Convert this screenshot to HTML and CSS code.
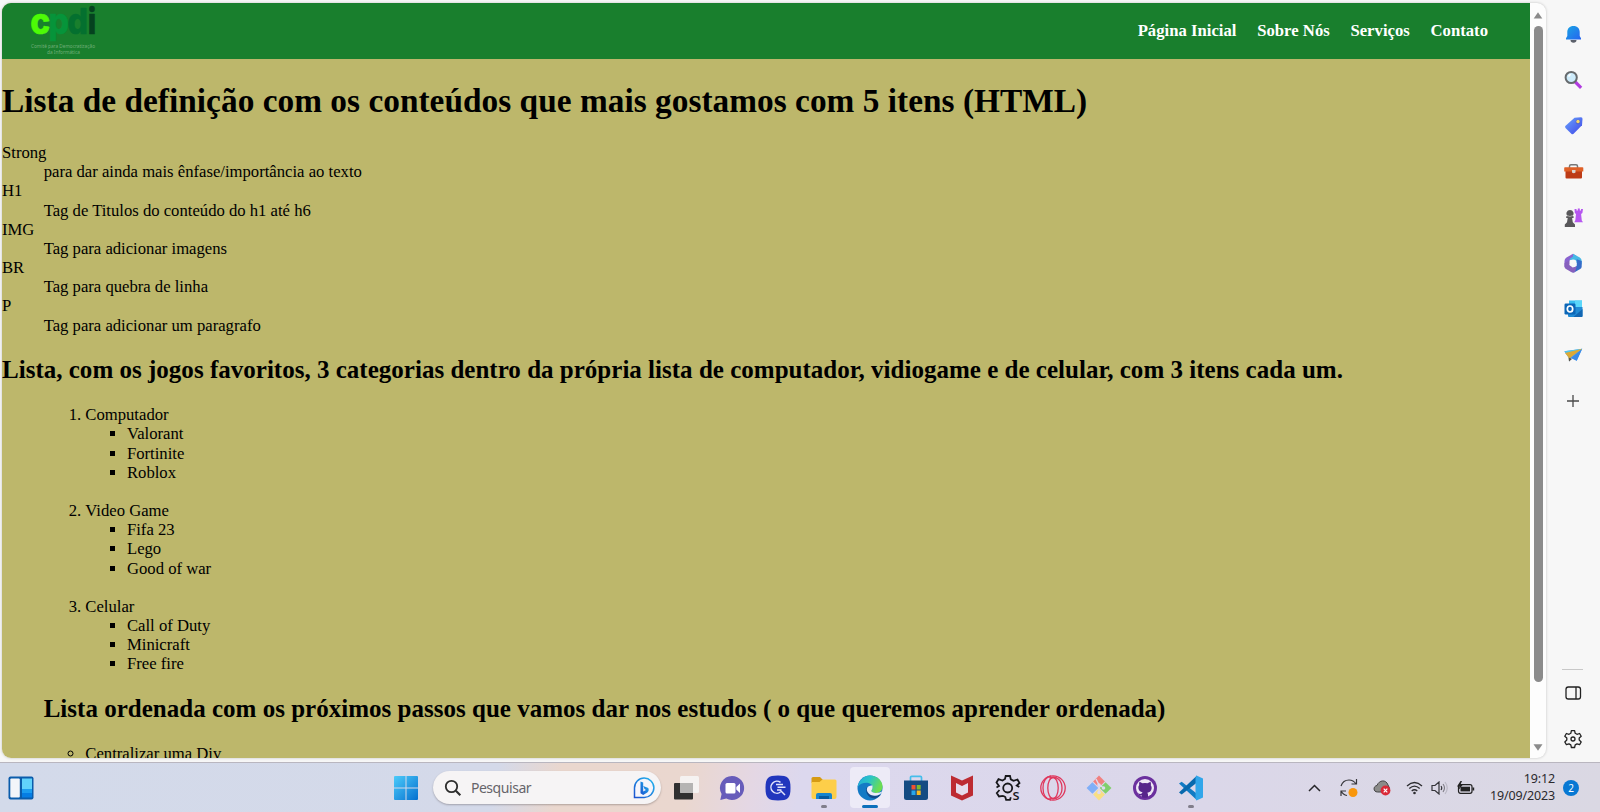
FILE: index.html
```html
<!DOCTYPE html>
<html lang="pt-BR">
<head>
<meta charset="utf-8">
<title>CPDI</title>
<link rel="stylesheet" href="styles.css">
</head>
<body>
<div class="browser">
  <div class="viewport">
    <div class="page">
      <header class="header">
        <svg class="logo" width="70" height="56" viewBox="28 3 70 56">
          <g class="logo-word">
            <text x="30.2" y="34" fill="#4dfb06" stroke="#4dfb06" textLength="20" lengthAdjust="spacingAndGlyphs">c</text>
            <text x="48.6" y="34" fill="#06943a" stroke="#06943a" textLength="20.500" lengthAdjust="spacingAndGlyphs">p</text>
            <text x="67.600" y="34" fill="#04702f" stroke="#04702f" textLength="20.500" lengthAdjust="spacingAndGlyphs">d</text>
            <text x="87.800" y="34" fill="#05421f" stroke="#05421f" textLength="8.500" lengthAdjust="spacingAndGlyphs">i</text>
          </g>
          <g class="logo-caption">
            <text x="31" y="48" textLength="64" lengthAdjust="spacingAndGlyphs">Comitê para Democratização</text>
            <text x="47" y="53.5" textLength="33" lengthAdjust="spacingAndGlyphs">da Informática</text>
          </g>
        </svg>
        <nav class="nav"><a>Página Inicial</a><a>Sobre Nós</a><a>Serviços</a><a>Contato</a></nav>
      </header>
      <main>
        <h1>Lista de definição com os conteúdos que mais gostamos com 5 itens (HTML)</h1>
        <dl>
          <dt>Strong</dt><dd>para dar ainda mais ênfase/importância ao texto</dd>
          <dt>H1</dt><dd>Tag de Titulos do conteúdo do h1 até h6</dd>
          <dt>IMG</dt><dd>Tag para adicionar imagens</dd>
          <dt>BR</dt><dd>Tag para quebra de linha</dd>
          <dt>P</dt><dd>Tag para adicionar um paragrafo</dd>
        </dl>
        <h2>Lista, com os jogos favoritos, 3 categorias dentro da própria lista de computador, vidiogame e de celular, com 3 itens cada um.</h2>
        <div class="nested">
          <ol class="categories">
            <li>Computador<ul class="games"><li>Valorant</li><li>Fortinite</li><li>Roblox</li></ul></li>
            <li>Video Game<ul class="games"><li>Fifa 23</li><li>Lego</li><li>Good of war</li></ul></li>
            <li>Celular<ul class="games"><li>Call of Duty</li><li>Minicraft</li><li>Free fire</li></ul></li>
          </ol>
          <h2>Lista ordenada com os próximos passos que vamos dar nos estudos ( o que queremos aprender ordenada)</h2>
          <ul class="steps"><li>Centralizar uma Div</li></ul>
        </div>
      </main>
    </div>
    <div class="scrollbar">
      <svg width="10" height="7" viewBox="0 0 10 7"><path d="M5 0.3 9.3 6.5H.7Z" fill="#8b8b8b"/></svg>
      <div class="thumb"></div>
      <svg width="10" height="7" viewBox="0 0 10 7"><path d="M.5.3H9.5L5 6.8Z" fill="#8b8b8b"/></svg>
    </div>
  </div>
  <aside class="sidebar">
    <div class="tools">
      <span><svg viewBox="0 0 24 24"><defs><linearGradient id="bell" x1="0" y1="0" x2="1" y2="1"><stop offset="0" stop-color="#1aa5e4"/><stop offset="1" stop-color="#2563f0"/></linearGradient></defs><path d="M9.5 18h6c0 1.7-1.2 2.8-3 2.8s-3-1.100-3-2.800z" fill="#5b606b"/><path d="M12.500 4C8.600 4 6.300 6.600 6.300 10v4L5 16.200V17.500H20V16.200L18.700 14V10C18.700 6.600 16.400 4 12.500 4Z" fill="url(#bell)"/></svg></span>
      <span><svg viewBox="0 0 24 24"><path d="m15 14.700 4 4" stroke="#b13be0" stroke-width="3.200" stroke-linecap="square"/><circle cx="10.200" cy="9.500" r="5.600" fill="#cdebfa" stroke="#666a6d" stroke-width="2"/><path d="m7.500 8.500 2-2.200" stroke="#fff" stroke-width="1.500"/></svg></span>
      <span><svg viewBox="0 0 24 24"><defs><linearGradient id="tag" x1="0" y1="0" x2="1" y2="1"><stop offset="0" stop-color="#69a4fb"/><stop offset="1" stop-color="#3f45e8"/></linearGradient></defs><path d="M13.500 3.700 20 3.200Q21.600 3.300 21.500 5L21 11.300 12.600 19.800Q11.500 20.800 10.300 19.700L4.500 14Q3.500 12.800 4.600 11.700Z" fill="url(#tag)"/><circle cx="17" cy="8" r="2.400" fill="#5465c9"/><circle cx="17" cy="7.500" r="1.700" fill="#f4d66a"/></svg></span>
      <span><svg viewBox="0 0 24 24"><path d="M8.500 8V6.200Q8.500 4.700 10 4.700h5Q16.500 4.700 16.500 6.200V8" fill="none" stroke="#777" stroke-width="1.500"/><rect x="4.500" y="9" width="16.500" height="9.500" rx="1" fill="#bd3b16"/><path d="M4 7.300h17.500q.8 0 .8.800v3.400H3.200V8.100q0-.8.800-.8z" fill="#df6027"/><path d="M11 10h3.500v2.500q-1.700 1.600-3.500 0z" fill="#d9d5d1"/></svg></span>
      <span><svg viewBox="0 0 24 24"><g transform="translate(0 -1)"><path d="M13.500 4h2v1.500h1.300V3.500h2v2H20V4h2l-.6 4-1.300 1 .7 6.500 1.200 1.800h-8.700l1-2 .7-6.300-1.200-1z" fill="#b657f0"/><path d="M9 5a3.700 3.700 0 0 1 2.600 6.300h1v1.800h-1.500l.7 4.200 2.200 2.200v2.400H3.800v-2.400L6 17.300l.7-4.200H5.200v-1.800h1.200A3.700 3.700 0 0 1 9 5Z" fill="#59585b"/><path d="M6 10.500q3 2 5.800 0" stroke="#aaa" fill="none"/></g></svg></span>
      <span><svg viewBox="0 0 24 24"><path d="M12 2.800 5.500 6.500Q3.500 7.700 3.500 10v6l4.800-2.700V9.800L15.500 5Z" fill="#8a63cf"/><path d="M12 2.800 18.800 6.600Q20.700 7.800 20.700 10v3.500L15.500 12 8.300 8.200 12 5.500Z" fill="#45b8e6"/><path d="M20.700 10v5.500q0 1.700-1.500 2.600L14 21.100q-1.500.9-3.200 0L8.500 19.600 15.700 15V8.300Z" fill="#366bc8"/><path d="M3.500 12v3.500q0 1.700 1.500 2.600l5.200 3q1.800 1 3.800 0l1.700-5.700-4 1L8.300 14V9.500Z" fill="#8760bd"/><circle cx="12.200" cy="11.900" r="3.300" fill="#f7f7f7"/></svg></span>
      <span><svg viewBox="0 0 24 24"><rect x="8" y="3.500" width="13" height="8" fill="#39bdf0"/><path d="M14 3.500h7v7h-7z" fill="#5ad7fa"/><path d="M7 10h14.500v9q0 1-1 1H8q-1 0-1-1z" fill="#218bd5"/><path d="m21.500 12-9 8h8q1 0 1-1z" fill="#1266b2"/><rect x="3.500" y="6.500" width="11" height="11" rx="1.200" fill="#0b66b7"/><ellipse cx="9" cy="12" rx="2.700" ry="3" fill="none" stroke="#fff" stroke-width="1.700"/></svg></span>
      <span><svg viewBox="0 0 24 24"><path d="m3.300 8.200 17.900-2.500-5.500 12-5.200-2.500L8 18.500l-.7-4.200Z" fill="#4ca0ed"/><path d="m21.200 5.700-11 9.300 5.500 2.700Z" fill="#388ae9"/><path d="M3.300 8.200 21.200 5.700 9.500 12.800Z" fill="#50c6ed"/><path d="M4 10 21.200 5.700 9.300 14.700 8 18.300l-.7-4.300Z" fill="#dba936"/><path d="M8 14.700 8 18.500l3-2.500z" fill="#59534f"/></svg></span>
      <span><svg viewBox="0 0 24 24"><path d="M12 6v12M6 12h12" stroke="#4a4a4a" stroke-width="1.300"/></svg></span>
    </div>
    <div class="tools tools-bottom">
      <span><svg viewBox="0 0 24 24"><rect x="5" y="6" width="14.500" height="12" rx="2.300" fill="none" stroke="#222" stroke-width="1.300"/><path d="M15 6v12" stroke="#222" stroke-width="1.300"/></svg></span>
      <span><svg viewBox="0 0 24 24" fill="none" stroke="#222" stroke-width="1.300" stroke-linejoin="round"><path d="M10.400 3.700h3.200l.6 2.600 1.800 1 2.600-.8 1.600 2.800-2 1.800v2l2 1.800-1.600 2.800-2.600-.8-1.800 1-.6 2.600h-3.200L9.800 17.900l-1.800-1-2.600.8-1.600-2.800 2-1.800v-2l-2-1.800 1.600-2.800 2.600.8 1.800-1Z"/><circle cx="12" cy="12" r="2"/></svg></span>
    </div>
  </aside>
</div>
<footer class="taskbar">
  <div class="widgets"><svg width="26" height="24" viewBox="0 0 26 24"><rect x=".5" y=".5" width="25" height="23" rx="2" fill="#0b5cab"/><rect x="2.300" y="2.500" width="9.500" height="19" rx="1" fill="#f3f5f9"/><path d="M14 2.500h10v10.500H14z" fill="#61d2fb"/><path d="M14 13h10v4H14z" fill="#1a9cf0"/><path d="M14 17h10v4.500H14z" fill="#057de4"/></svg></div>
  <div class="apps">
    <span class="app"><svg viewBox="0 0 28 28"><defs><linearGradient id="win" gradientUnits="userSpaceOnUse" x1="2" y1="2" x2="26" y2="26"><stop offset="0" stop-color="#4ccbfa"/><stop offset="1" stop-color="#0570cf"/></linearGradient></defs><path d="M3 2h10.500v11.500H2V3q0-1 1-1zM14.500 2H25q1 0 1 1v10.500H14.500zM2 14.500h11.500V26H3q-1 0-1-1zM14.500 14.500H26V25q0 1-1 1H14.500z" fill="url(#win)"/></svg></span>
    <div class="search">
      <svg width="18" height="18" viewBox="0 0 18 18"><circle cx="7.500" cy="7.500" r="5.700" fill="none" stroke="#2d2d2d" stroke-width="1.800"/><path d="m11.800 11.800 4.500 4.500" stroke="#2d2d2d" stroke-width="2.100"/></svg>
      <span class="search-text">Pesquisar</span>
      <svg width="22" height="22" viewBox="0 0 22 22"><defs><linearGradient id="bing" x1="1" y1="0" x2="0" y2="1"><stop offset="0" stop-color="#24b8ef"/><stop offset="1" stop-color="#1a51cf"/></linearGradient></defs><path d="M1.500 20.500V11A9.700 9.700 0 1 1 11 20.500Z" fill="#f6f5fb" stroke="url(#bing)" stroke-width="1.500"/><path d="m7.500 4.500 2.700 1v9l2.800-1.600-1.500-.8-1.200-3 5 2q1.200 3-1 4.400L10.200 18l-2.700-1.700z" fill="url(#bing)"/></svg>
    </div>
    <span class="app"><svg viewBox="0 0 28 28"><rect x="2" y="9" width="19" height="16.500" rx="1" fill="#303030"/><rect x="8" y="2" width="19" height="17" rx="1.500" fill="#f5f4f3" fill-opacity=".93"/><path d="M8 9h13v10H9.500Q8 19 8 17.500Z" fill="#b5b4b3"/></svg></span>
    <span class="app"><svg viewBox="0 0 28 28"><path d="M14 2A12 12 0 1 1 8.300 24.500L2.300 26 3.600 20A12 12 0 0 1 14 2Z" fill="#675cba"/><rect x="7.500" y="9" width="10" height="10.500" rx="1.500" fill="#fff"/><path d="m18.300 13 3.700-3.500v9.500l-3.700-3.500z" fill="#fff"/></svg></span>
    <span class="app"><svg viewBox="0 0 28 28"><path d="M14 1.500c10 0 12.500 2.500 12.500 12.500S24 26.500 14 26.500 1.500 24 1.500 14 4 1.500 14 1.500Z" fill="#2136bd"/><path d="M16.500 8.300A6 6 0 1 0 16.500 18M16.500 16.500l4.500 4.500M12 10.500h7M13.500 13.300h8M13 16h4.500" fill="none" stroke="#e3e5fb" stroke-width="1.500"/></svg></span>
    <span class="app"><svg viewBox="0 0 28 28"><path d="M1.500 4.500Q1.500 3 3 3h7l3 3-3 3H1.500z" fill="#d69b13"/><path d="M1.500 8h8l3-2.500H25q1.500 0 1.500 1.500v16q0 2-2 2h-21q-2 0-2-2z" fill="#fdce49"/><path d="M6 25v-4q0-2 2-2h12q2 0 2 2v4z" fill="#1684ce"/><path d="M9 22h10v3H9z" fill="#075a9e"/></svg><i class="dot"></i></span>
    <span class="app active"><svg viewBox="0 0 28 28"><defs><linearGradient id="eg" x1="0" y1="0" x2="1" y2=".4"><stop offset="0" stop-color="#20a7dd"/><stop offset=".5" stop-color="#2bc5c5"/><stop offset="1" stop-color="#6cdd50"/></linearGradient></defs><circle cx="14" cy="14" r="12.500" fill="#137ac5"/><path d="M1.600 13C3 6 8 1.500 14 1.500c7.300 0 12.500 5.200 12.500 11 0 4.200-3 6.500-6.600 6.500-2.500 0-4.500-.9-4.500-2.200 0-1 1.200-1.300 1.200-3.800C16.600 8 6 6.500 1.600 13Z" fill="url(#eg)"/><path d="M11.300 12.600C8 17 12 25 19 24.500q3-.5 5.300-3.300c.5-.6 0-1-.7-.7C17 23.500 11 19.500 11.300 12.600Z" fill="#114a8b"/><path d="M16.500 11.500c-5-.6-7 3.500-4.600 7 2.300 3.300 7.800 4.200 11.600 2l1.600-1.200 1.900-2.300C25 18 22.500 19 19.900 19c-2.500 0-4.500-.9-4.500-2.200 0-1 1.200-1.300 1.200-3.800z" fill="#ececf8"/></svg><i class="bar"></i></span>
    <span class="app"><svg viewBox="0 0 28 28"><path d="M8.500 8V3.500q0-1.200 1.200-1.200h8.600q1.200 0 1.200 1.200V8" fill="none" stroke="#45bdeb" stroke-width="1.700"/><path d="M2 6.500h24v17q0 2.500-2.500 2.500h-19Q2 26 2 23.500Z" fill="#144b82"/><path d="M9.500 11h4v4.500h-4z" fill="#ef5130"/><path d="M14.700 11h4v4.500h-4z" fill="#7dba2c"/><path d="M9.500 16.500h4V21h-4z" fill="#28a6ea"/><path d="M14.700 16.500h4V21h-4z" fill="#f9ba20"/></svg></span>
    <span class="app"><svg viewBox="0 0 28 28"><path d="m3 1.500 11 5 11-5v20L14 26.500 3 21.500Z" fill="#bd2b32"/><path d="m8 9 6 3 6-3v9.500l-6 3-6-3z" fill="#e5dcec"/></svg></span>
    <span class="app"><svg viewBox="0 0 28 28" fill="none" stroke="#17171b" stroke-width="1.800"><path d="M9 21.800 5 22.500 2.800 19 5.500 16M2.500 13.500 5 12 2.500 8.500l2-3.300 4 1.300 2.500-1.500.7-3h4.300l.8 3.300 2.700 1.500 4-1.300 2 3.500-2.800 2.500 2.600 1.600M9 21.800l2.300 1.200.8 2.800H16l.8-2.500"/><circle cx="13.700" cy="14" r="4.500"/><text x="18.500" y="26.300" font-family="Noto Sans" font-size="14.500" font-weight="500" fill="#17171b" stroke="none">s</text></svg></span>
    <span class="app"><svg viewBox="0 0 28 28" fill="none" stroke="#df385d" stroke-width="1.300"><circle cx="14" cy="14" r="12.200"/><ellipse cx="14" cy="14" rx="5.200" ry="10.500"/><path d="M10.500 4.200C18 1 23 7 23 14s-5 13-12.500 9.800M12 2C6 3 4 8 4 14s2 11 8 12"/></svg></span>
    <span class="app"><svg viewBox="0 0 28 28"><g transform="rotate(45 14 14)"><rect x="5.200" y="5.200" width="8.300" height="8.300" fill="#f1817f"/><rect x="14.500" y="5.200" width="8.300" height="8.300" fill="#80cf6c"/><rect x="14.500" y="14.500" width="8.300" height="8.300" fill="#f8df83"/><rect x="5.200" y="14.500" width="8.300" height="8.300" fill="#80aff8"/></g><path d="m11 5 3 6v9M14 11l5 3" fill="none" stroke="#dedaf0" stroke-width="1.400"/><circle cx="14" cy="11" r="1.800" fill="#dedaf0"/><circle cx="18.500" cy="14" r="1.800" fill="#dedaf0"/><circle cx="14" cy="18.500" r="1.800" fill="#dedaf0"/></svg></span>
    <span class="app"><svg viewBox="0 0 28 28"><circle cx="14" cy="14" r="12" fill="#6b309e"/><circle cx="14" cy="14" r="9" fill="#eee7f5"/><path d="m8.500 7.700 3 1.600q2.500-.6 5 0l3-1.600q.8 2 .3 3.500 1.200 1.500.8 3.500-.6 3.600-4.300 4 .7.800.7 2v2.500q-3 1-6 0V21.500q-3.300.5-4-2.500 2 1.800 4 .3 0-.6.600-1-3.700-.4-4.200-4-.3-2 .8-3.300-.4-1.500.3-3.300Z" fill="#57258b"/></svg></span>
    <span class="app"><svg viewBox="0 0 28 28"><path d="M2 9.500 4.700 7.800 20 19.800v6.400Z" fill="#117bc4"/><path d="M2 18.500 4.700 20.500 20 8.500V1.500Z" fill="#0869ad"/><path d="m19.500 1.500 6.500 3v19l-6.500 3-1-2V3.500Z" fill="#31a6ea"/></svg><i class="dot"></i></span>
  </div>
  <div class="tray">
    <svg width="13" height="8" viewBox="0 0 13 8"><path d="m1 7 5.500-5.500L12 7" fill="none" stroke="#27272b" stroke-width="1.500"/></svg>
    <svg class="sync" width="20" height="20" viewBox="0 0 20 20"><path d="M2 8Q4 2 10 2q4.500 0 7 4M17.500 1v5h-5M2 18v-5h5M2 13q2 3.800 6 4.500" fill="none" stroke="#36363a" stroke-width="1.200"/><circle cx="14" cy="14.500" r="4.500" fill="#f8960c"/></svg>
    <svg class="cloud" width="18" height="17" viewBox="0 0 18 17"><path d="M4.500 13C0 13 0 7 4 6.500 6 1 13 0 15 6q3 3 0 7z" fill="#8b8b89" stroke="#434344"/><circle cx="12.500" cy="11.500" r="4.900" fill="#da2938"/><path d="m10.700 9.700 3.600 3.600m0-3.600-3.600 3.600" stroke="#fff" stroke-width="1.200"/></svg>
    <svg class="wifi" width="17" height="14" viewBox="0 0 17 14"><path d="M1 5q7.500-7 15 0M3.300 7.500q5.200-4.800 10.400 0M5.700 10q2.800-2.500 5.600 0" fill="none" stroke="#2b2b2f" stroke-width="1.300"/><circle cx="8.500" cy="12" r="1.300" fill="#2b2b2f"/></svg>
    <svg class="sound" width="18" height="14" viewBox="0 0 18 14" fill="none"><path d="M1 4.500h3L8 1v12L4 9.500H1zM10 5q1.500 2 0 4" stroke="#333338" stroke-width="1.200"/><path d="M12 3q3 4 0 8" stroke="#7c7b84" stroke-width="1.100"/><path d="M14 1q4.500 6 0 12" stroke="#b9b7c3" stroke-width="1.100"/></svg>
    <svg class="battery" width="18" height="14" viewBox="0 0 18 14"><rect x="1.500" y="3.700" width="13.500" height="8.600" rx="2" fill="none" stroke="#222" stroke-width="1.200"/><path d="M3.500 5.700H13v4.700H3.500z" fill="#222"/><path d="M15.500 6.500h1.700v3h-1.700z" fill="#222"/><path d="M3.500 0 0 5.500h2.500L1.500 9 6 3.500H3.500L5 0z" fill="#222"/></svg>
    <div class="clock"><span>19:12</span><span>19/09/2023</span></div>
    <span class="badge">2</span>
  </div>
</footer>
</body>
</html>
```
FILE: styles.css
```css
* { box-sizing: border-box; }
body {
  margin: 0;
  width: 1600px;
  height: 812px;
  overflow: hidden;
  display: flex;
  flex-direction: column;
  background: #f7f7f7;
  font-family: "Liberation Serif", serif;
  font-size: 16.667px;
  line-height: 19.17px;
  color: #000;
}
svg { display: block; flex: none; }
.browser { height: 762px; display: flex; padding: 2.500px 0 4px 2px; }
.viewport {
  width: 1544px;
  height: 755.500px;
  display: flex;
  overflow: hidden;
  border-radius: 9px;
  background: #fdfdfd;
  box-shadow: 0 0 3px rgba(0, 0, 0, .22);
}
.page { width: 1528px; flex: none; background: #bdb76b; overflow: hidden; }
.header {
  height: 56.400px;
  display: flex;
  justify-content: space-between;
  align-items: center;
  padding: 0 42px 0 26px;
  background: #197f2d;
}
.logo { overflow: visible; }
.logo-word { font: 800 36px Inter, sans-serif; stroke-width: .500px; stroke-linejoin: round; }
.logo-caption { font: 5px "Noto Sans", sans-serif; fill: #6fae78; }
.nav { display: flex; gap: 20.700px; font-weight: 700; letter-spacing: .02px; color: #fff; }
h1 { margin: 22.800px 0 23px; font-size: 33.333px; line-height: 38.300px; letter-spacing: .028px; white-space: nowrap; }
h2 { margin: 20.750px 0; font-size: 25px; line-height: 29px; letter-spacing: .013px; white-space: nowrap; }
dl { margin: 0; }
dd { margin: 0 0 0 41.667px; }
.nested { padding-left: 41.667px; }
ol, ul { margin: 0; padding-left: 41.667px; }
.categories > li + li { margin-top: 19.170px; }
.games { list-style: square; }
.steps { list-style: circle; }
.scrollbar {
  width: 16px;
  padding: 9px 0 7px;
  display: flex;
  flex-direction: column;
  align-items: center;
}
.thumb { width: 9px; height: 656px; margin: 7.500px 0 auto; border-radius: 5px; background: #8b8b8b; }
.sidebar {
  width: 53px;
  display: flex;
  flex-direction: column;
  justify-content: space-between;
  align-items: center;
  padding: 8.500px 0 0;
}
.tools { display: flex; flex-direction: column; }
.tools span { height: 45.900px; display: flex; align-items: center; }
.tools svg { width: 24px; height: 24px; }
.tools-bottom { width: 21px; align-items: center; border-top: 1px solid #c8c8c8; margin-bottom: -4px; }
.taskbar {
  height: 50px;
  display: flex;
  align-items: center;
  border-top: 1px solid #b9b6bf;
  background: linear-gradient(100deg, #d3daea 0, #d4d9e9 31%, #ead7ce 35%, #ead7cf 43%, #e4d7e4 47%, #dcd8ee 50%, #dbd7e9 75%, #dad8e3 100%);
  font-family: "Noto Sans", sans-serif;
}
.widgets { width: 383px; padding-left: 8px; }
.apps { display: flex; align-items: center; }
.app {
  position: relative;
  width: 45.900px;
  height: 50px;
  display: flex;
  align-items: center;
  justify-content: center;
}
.app svg { width: 28px; height: 28px; }
.active { width: 40px; height: 41px; margin: 0 2.950px; border-radius: 4px; background: #edebf7; }
.dot, .bar { position: absolute; bottom: 5px; height: 3px; border-radius: 2px; }
.dot { width: 6px; background: #817e8b; }
.bar { width: 16px; bottom: 0; background: #0b70bb; }
.search {
  width: 228px;
  height: 32.500px;
  margin: 0 2.500px 0 4px;
  padding: 0 6px 0 11px;
  display: flex;
  align-items: center;
  border-radius: 17px;
  background: #f6f4f5;
  box-shadow: 0 1px 2px rgba(70, 60, 60, .35);
}
.search-text { flex: 1; padding-left: 9px; font-size: 14px; letter-spacing: -.45px; color: #66646a; }
.tray { margin-left: auto; display: flex; align-items: center; padding-right: 21px; color: #2b2a2e; }
.sync { margin-left: 18px; }
.cloud { margin-left: 14px; }
.wifi { margin-left: 15px; }
.sound { margin-left: 8px; }
.battery { margin-left: 8px; }
.clock {
  width: 80px;
  display: flex;
  flex-direction: column;
  align-items: flex-end;
  font-size: 12.500px;
  line-height: 16.500px;
  letter-spacing: -.15px;
}
.badge {
  width: 16px;
  height: 16px;
  margin-left: 8px;
  border-radius: 50%;
  background: #0878d3;
  color: #fff;
  font-size: 10px;
  line-height: 16px;
  text-align: center;
}
```
